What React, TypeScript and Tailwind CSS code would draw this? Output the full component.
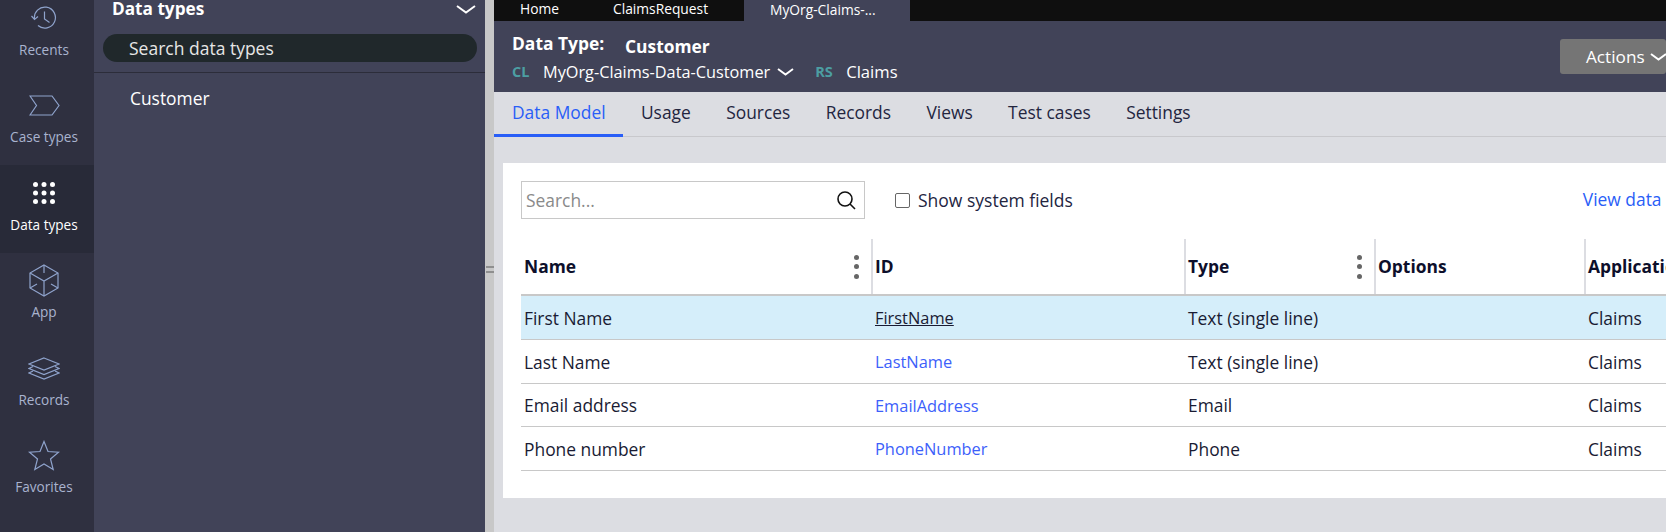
const font = { fontFamily: '"Open Sans", sans-serif' }

const Chevron = ({ w, h, sw = 2 }: { w: number; h: number; sw?: number }) => (
  <svg width={w} height={h} viewBox={`0 0 ${w} ${h}`} fill="none" stroke="currentColor" strokeWidth={sw} className="shrink-0">
    <path d={`M1 1L${w / 2} ${h - 1.5}L${w - 1} 1`} />
  </svg>
)

const RecentsIcon = () => (
  <svg width="26" height="24" viewBox="0 0 26 24" fill="none" stroke="currentColor" strokeWidth="1.2">
    <path d="M3.5 13A10.5 10.5 0 1 1 7 19.5" />
    <path d="M0.5 10L3.5 13.5L7 10.5" />
    <path d="M13.5 5.5v7.5l5 3.5" />
  </svg>
)

const CaseIcon = () => (
  <svg width="31" height="22" viewBox="0 0 31 22" fill="none" stroke="currentColor" strokeWidth="1.2">
    <path d="M1 1H23L30 10.5L23 20H1L7.5 10.5Z" />
  </svg>
)

const GridIcon = () => (
  <svg width="24" height="24" viewBox="0 0 24 24" fill="currentColor">
    {[3.5, 12, 20.5].flatMap(y => [3.5, 12, 20.5].map(x => <circle key={`${x}-${y}`} cx={x} cy={y} r="2.5" />))}
  </svg>
)

const AppIcon = () => (
  <svg width="32" height="33" viewBox="0 0 32 33" fill="none" stroke="currentColor" strokeWidth="1.2">
    <path d="M16 1L30 9V24L16 32L2 24V9Z" />
    <path d="M16 1V9M2 9L16 17L30 9M16 17V32M2 24L9 20M30 24L23 20" />
  </svg>
)

const RecordsIcon = () => (
  <svg width="32" height="23" viewBox="0 0 32 23" fill="none" stroke="currentColor" strokeWidth="1.2">
    <path d="M16 1L31 7L16 13L1 7Z" />
    <path d="M5 9.5L1 11.5L16 17.5L31 11.5L27 9.5" />
    <path d="M5 14L1 16L16 22L31 16L27 14" />
  </svg>
)

const StarIcon = () => (
  <svg width="32" height="31" viewBox="0 0 32 31" fill="none" stroke="currentColor" strokeWidth="1.2">
    <path d="M16 1.5L20 11.5L30.5 12.2L22.5 19L25.2 29.5L16 24L6.8 29.5L9.5 19L1.5 12.2L12 11.5Z" />
  </svg>
)

const railItems = [
  { label: 'Recents', icon: <RecentsIcon /> },
  { label: 'Case types', icon: <CaseIcon /> },
  { label: 'Data types', icon: <GridIcon />, active: true },
  { label: 'App', icon: <AppIcon /> },
  { label: 'Records', icon: <RecordsIcon /> },
  { label: 'Favorites', icon: <StarIcon /> },
]

const tabs = ['Data Model', 'Usage', 'Sources', 'Records', 'Views', 'Test cases', 'Settings']

const rows = [
  { name: 'First Name', id: 'FirstName', type: 'Text (single line)', hover: true },
  { name: 'Last Name', id: 'LastName', type: 'Text (single line)' },
  { name: 'Email address', id: 'EmailAddress', type: 'Email' },
  { name: 'Phone number', id: 'PhoneNumber', type: 'Phone' },
]

const Kebab = () => (
  <span className="flex h-[24px] w-[6px] flex-col justify-between">
    <span className="h-[5px] w-[5px] rounded-full bg-[#666666]" />
    <span className="h-[5px] w-[5px] rounded-full bg-[#666666]" />
    <span className="h-[5px] w-[5px] rounded-full bg-[#666666]" />
  </span>
)

const HeaderCell = ({ label, menu, divider }: { label: string; menu?: boolean; divider?: boolean }) => (
  <div className={`flex items-center justify-between pr-[11px] text-[17.4px] font-bold text-[#0d0f2b] ${divider ? 'border-l-2 border-[#dcdde2] pl-[2px]' : 'pl-[3px]'}`}>
    <span className="whitespace-nowrap">{label}</span>
    {menu && <Kebab />}
  </div>
)

export default function App() {
  return (
    <div className="flex h-[532px] w-[1666px] overflow-hidden bg-[#dcdde2]" style={font}>
      {/* Rail */}
      <nav className="w-[94px] shrink-0 bg-[#2f3040]">
        <div className="-mt-[10px]">
          {railItems.map(item => (
            <div key={item.label} className={`flex h-[87.5px] flex-col items-center pr-[6px] pt-[8px] ${item.active ? 'bg-[#282a38] text-white' : 'text-[#8fa3cc]'}`}>
              <div className="flex h-[40px] items-center justify-center">{item.icon}</div>
              <div className={`mt-[1.5px] text-[13.6px] leading-5 ${item.active ? 'text-white' : 'text-[#a9b3cf]'}`}>{item.label}</div>
            </div>
          ))}
        </div>
      </nav>

      {/* Explorer panel */}
      <aside className="w-[391px] shrink-0 bg-[#414358] text-white">
        <div className="flex h-[18px] items-center justify-between pl-[18px] pr-[9px]">
          <span className="text-[17.2px] font-bold leading-[18px]">Data types</span>
          <Chevron w={20} h={9} />
        </div>
        <div className="mx-[9px] mr-[8px] mt-[16px] flex h-[28px] items-center rounded-full bg-[#20282b] pl-[26px] text-[17.5px] text-[#e6e6e6]">Search data types</div>
        <div className="mt-[10px] h-px bg-[#2c2d3a]" />
        <div className="mt-[13px] pl-[36px] text-[17.4px] leading-6">Customer</div>
      </aside>

      {/* Splitter */}
      <div className="flex w-[9px] shrink-0 items-center justify-center bg-[#c8c8c8] pt-[6px]">
        <div className="flex w-[8px] flex-col gap-[3px]">
          <span className="h-[2px] bg-[#8f8f8f]" />
          <span className="h-[2px] bg-[#8f8f8f]" />
        </div>
      </div>

      {/* Main */}
      <main className="min-w-0 flex-1">
        <div className="flex h-[21px] bg-[#0f0f0f] text-[13.8px] leading-[18px] text-white">
          <span className="ml-[26px] w-[93px]">Home</span>
          <span className="w-[131px]">ClaimsRequest</span>
          <span className="w-[166px] bg-[#414358] pl-[26px] pt-[1px]">MyOrg-Claims-...</span>
        </div>

        <header className="flex h-[71px] justify-between bg-[#414358] text-white">
          <div className="pl-[18px]">
            <div className="flex h-[37px] items-end text-[17.4px] font-bold leading-6">
              <span className="mb-[3px] w-[113px]">Data Type:</span>
              <span>Customer</span>
            </div>
            <div className="mt-[1px] flex h-[26px] items-center text-[16.3px]">
              <span className="w-[31px] text-[14.5px] font-bold text-[#4c9ea3]">CL</span>
              <span>MyOrg-Claims-Data-Customer</span>
              <span className="ml-[7px]"><Chevron w={17} h={8} /></span>
              <span className="ml-[21px] w-[31px] text-[14.5px] font-bold text-[#4c9ea3]">RS</span>
              <span className="text-[16.6px]">Claims</span>
            </div>
          </div>
          <div className="mt-[18px] flex h-[35px] w-[106px] items-center rounded-[3px] bg-[#757575] pl-[26px] text-[17.2px]">
            Actions
            <span className="ml-[5px]"><Chevron w={17} h={8} /></span>
          </div>
        </header>

        <div className="flex h-[45px] border-b border-[#c8c8cc] text-[17.4px] text-[#23253f]">
          {tabs.map((tab, i) => (
            <div key={tab} className={`flex items-center whitespace-nowrap px-[17.7px] first:pl-[18px] ${i === 0 ? '-mb-px border-b-[3px] border-[#295ef7] pb-[1px] text-[#295ef7]' : 'pb-[3px]'}`}>{tab}</div>
          ))}
        </div>

        <section className="ml-[9px] mt-[26px] h-[335px] bg-white pl-[18px] pt-[18px]">
          <div className="flex items-center">
            <div className="flex h-[38px] w-[344px] items-center justify-between border border-[#c8c8c8] pl-[4px] pr-[8px] text-[17.4px] text-[#8a8a8a]">
              Search...
              <svg width="20" height="20" viewBox="0 0 20 20" fill="none" stroke="#111" strokeWidth="1.6">
                <circle cx="9" cy="9" r="7" />
                <path d="M14 14l5 5" />
              </svg>
            </div>
            <span className="ml-[30px] h-[15px] w-[15px] rounded-[2px] border border-[#666666]" />
            <span className="ml-[8px] whitespace-nowrap text-[17.5px] text-[#23253f]">Show system fields</span>
            <span className="mb-[1px] ml-[510px] whitespace-nowrap text-[17.4px] text-[#295ef7]">View data</span>
          </div>

          <div className="mt-[20px] grid h-[57px] grid-cols-[350px_313px_190px_210px_1fr] border-b-2 border-[#c8c8c8]">
            <HeaderCell label="Name" menu />
            <HeaderCell label="ID" divider />
            <HeaderCell label="Type" menu divider />
            <HeaderCell label="Options" divider />
            <HeaderCell label="Application" divider />
          </div>

          {rows.map(row => (
            <div key={row.id} className={`grid h-[43.75px] grid-cols-[351px_313px_190px_210px_1fr] items-center border-b border-[#c8c8c8] pl-[3px] pt-[1px] text-[17.4px] text-[#191b33] ${row.hover ? 'bg-[#d5eefa]' : ''}`}>
              <span>{row.name}</span>
              <span className={`pt-[1px] text-[16.4px] ${row.hover ? 'text-[#191b33] underline' : 'text-[#3d5ffa]'}`}>{row.id}</span>
              <span>{row.type}</span>
              <span />
              <span>Claims</span>
            </div>
          ))}
        </section>
      </main>
    </div>
  )
}
